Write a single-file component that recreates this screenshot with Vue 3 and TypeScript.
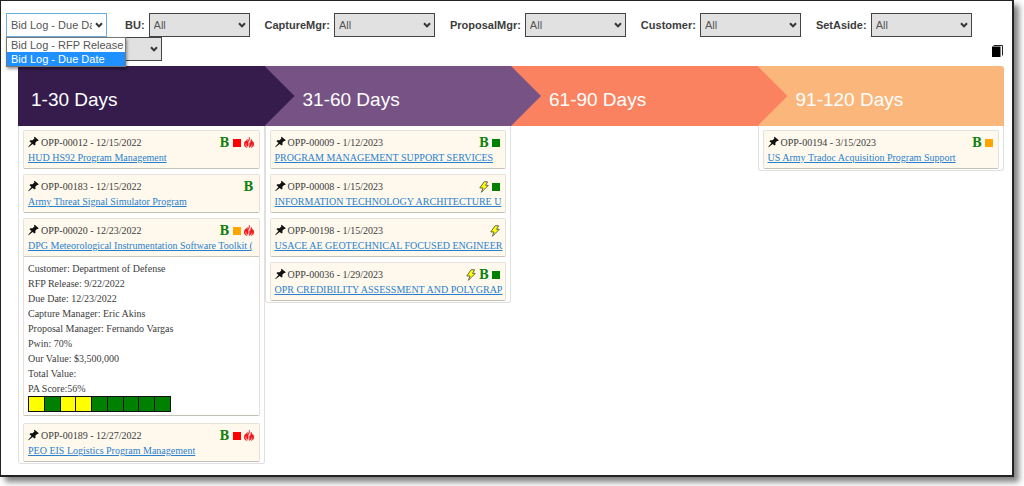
<script setup lang="ts">
import { ref } from 'vue'

type Mark = 'bolt' | 'bid' | 'red' | 'green' | 'orange' | 'fire'

interface Opportunity {
  id: string
  date: string
  title: string
  marks: Mark[]
  details?: string[]
  score?: string[]
}

interface Stage {
  label: string
  tone: string
  items: Opportunity[]
}

const views = ['Bid Log - RFP Release', 'Bid Log - Due Date']
const view = ref('Bid Log - Due Date')

const filters = [
  { id: 'bu', label: 'BU:' },
  { id: 'capture', label: 'CaptureMgr:' },
  { id: 'proposal', label: 'ProposalMgr:' },
  { id: 'customer', label: 'Customer:' },
  { id: 'setaside', label: 'SetAside:' },
]

const stages: Stage[] = [
  {
    label: '1-30 Days',
    tone: 'plum',
    items: [
      { id: 'OPP-00012', date: '12/15/2022', title: 'HUD HS92 Program Management', marks: ['bid', 'red', 'fire'] },
      { id: 'OPP-00183', date: '12/15/2022', title: 'Army Threat Signal Simulator Program', marks: ['bid'] },
      {
        id: 'OPP-00020',
        date: '12/23/2022',
        title: 'DPG Meteorological Instrumentation Software Toolkit (',
        marks: ['bid', 'orange', 'fire'],
        details: [
          'Customer: Department of Defense',
          'RFP Release: 9/22/2022',
          'Due Date: 12/23/2022',
          'Capture Manager: Eric Akins',
          'Proposal Manager: Fernando Vargas',
          'Pwin: 70%',
          'Our Value: $3,500,000',
          'Total Value:',
          'PA Score:56%',
        ],
        score: ['yellow', 'green', 'yellow', 'yellow', 'green', 'green', 'green', 'green', 'green'],
      },
      { id: 'OPP-00189', date: '12/27/2022', title: 'PEO EIS Logistics Program Management', marks: ['bid', 'red', 'fire'] },
    ],
  },
  {
    label: '31-60 Days',
    tone: 'violet',
    items: [
      { id: 'OPP-00009', date: '1/12/2023', title: 'PROGRAM MANAGEMENT SUPPORT SERVICES', marks: ['bid', 'green'] },
      { id: 'OPP-00008', date: '1/15/2023', title: 'INFORMATION TECHNOLOGY ARCHITECTURE U', marks: ['bolt', 'green'] },
      { id: 'OPP-00198', date: '1/15/2023', title: 'USACE AE GEOTECHNICAL FOCUSED ENGINEER', marks: ['bolt'] },
      { id: 'OPP-00036', date: '1/29/2023', title: 'OPR CREDIBILITY ASSESSMENT AND POLYGRAP', marks: ['bolt', 'bid', 'green'] },
    ],
  },
  { label: '61-90 Days', tone: 'coral', items: [] },
  {
    label: '91-120 Days',
    tone: 'peach',
    items: [
      { id: 'OPP-00194', date: '3/15/2023', title: 'US Army Tradoc Acquisition Program Support', marks: ['bid', 'orange'] },
    ],
  },
]
</script>

<template>
  <main class="frame">
    <form class="filters" @submit.prevent>
      <div class="picker view">
        <select v-model="view" aria-label="View">
          <option v-for="v in views" :key="v">{{ v }}</option>
        </select>
        <svg class="chevron" viewBox="0 0 8 6"><path d="M1 1.2 4 4.4 7 1.2" /></svg>
        <ul class="menu" role="listbox" aria-label="View options">
          <li v-for="v in views" :key="v" role="option" :aria-selected="v === view" :class="{ active: v === view }" @click="view = v">{{ v }}</li>
        </ul>
      </div>
      <div v-for="f in filters" :key="f.id" class="field">
        <label :for="f.id">{{ f.label }}</label>
        <div class="picker">
          <select :id="f.id"><option>All</option></select>
          <svg class="chevron" viewBox="0 0 8 6"><path d="M1 1.2 4 4.4 7 1.2" /></svg>
        </div>
      </div>
    </form>
    <div class="second">
      <div class="picker">
        <select aria-label="Status"><option></option></select>
        <svg class="chevron" viewBox="0 0 8 6"><path d="M1 1.2 4 4.4 7 1.2" /></svg>
      </div>
      <button class="copy" type="button" aria-label="Copy">
        <svg viewBox="0 0 12 12"><path d="M2.5.5h9v10" fill="none" stroke="#222" /><path d="M1 1.5h8.5V12H1z" /></svg>
      </button>
    </div>

    <section class="board">
      <div v-for="s in stages" :key="s.label" class="stage">
        <h2 :class="s.tone">{{ s.label }}</h2>
        <div v-if="s.items.length" class="cards">
          <article v-for="o in s.items" :key="o.id" :class="{ open: o.details }">
            <div class="head">
              <div class="line">
                <svg class="pin" viewBox="0 0 12 12"><path d="M7.2.2 11.8 4.2 10.8 5 9.9 4.8 8 6.9 8.2 9 7.2 9.9 5.1 8.2.6 11.6.3 11.2 3.8 7 1.6 5.1 2.5 4.1 4.9 4.2 7 2.2 6.5 1.2z" /></svg>
                <span>{{ o.id }} - {{ o.date }}</span>
                <span class="marks">
                  <template v-for="m in o.marks" :key="m">
                    <b v-if="m === 'bid'" class="bid">B</b>
                    <svg v-else-if="m === 'bolt'" class="bolt" viewBox="0 0 10 12"><path d="M5.2.7 8.6.8 6.6 4.3 9.3 4.4 2.4 11.3 4 7 .8 6.9z" /></svg>
                    <svg v-else-if="m === 'fire'" class="fire" viewBox="0 0 10 11"><path d="M5.2 0C6.3 2 5.3 3.2 4.4 4.8 3.8 6.1 4.6 7 4.3 8.3L3.5 9.5C2.3 8.6 2 7.2 2.6 5.8L1.4 7C1.2 8.5 1.9 9.6 3.3 10.6 1.1 10.2-.2 8.6.1 6.6.4 4.3 2.7 3.7 3.5 2.3L3.1 4.5C4.7 3.2 5.5 1.8 5.2 0zM7.4 2.1C7.2 3.4 8.2 4 9.2 5.1 10.8 7.4 9.7 10.1 7 10.6 8.5 9.5 8.8 8.2 7.8 7.1 7.9 8.8 6.8 9.6 5.6 10.5L4.9 10.1C6.2 8.8 5.1 7.3 5.6 5.9L6.4 4.8 6.6 6.5C7.2 5.6 6.2 3.6 7.4 2.1z" /></svg>
                    <i v-else :class="['square', m]"></i>
                  </template>
                </span>
              </div>
              <a href="#">{{ o.title }}</a>
            </div>
            <div v-if="o.details" class="details">
              <p v-for="d in o.details" :key="d">{{ d }}</p>
              <div class="score"><i v-for="(c, i) in o.score" :key="i" :class="c"></i></div>
            </div>
          </article>
        </div>
      </div>
    </section>
  </main>
</template>

<style>
body {
  background: #fff;
}
</style>

<style scoped>
* {
  box-sizing: border-box;
}
.frame {
  margin: 0 10px 10px 0;
  padding: 12px 8px 11px 5px;
  border: 2px solid #222;
  border-width: 1px 2px 2px 1px;
  box-shadow: 5px 5px 6px rgba(0, 0, 0, 0.5);
  background: #fff;
  color: #3c3c3c;
  font: 11px "Liberation Sans", Arial, sans-serif;
}
.filters {
  display: flex;
  gap: 15px;
}
.field {
  display: flex;
  align-items: center;
  gap: 4px;
}
.view {
  margin-right: 3px;
}
label {
  font-size: 11px;
  font-weight: bold;
}
.picker {
  position: relative;
  width: 101px;
}
select {
  display: block;
  width: 100%;
  height: 24px;
  padding: 0 14px 0 4px;
  appearance: none;
  border: 1px solid #444;
  border-radius: 0;
  background: #e1e1e1;
  color: #555;
  font: 11px "Liberation Sans", Arial, sans-serif;
}
.view select {
  border-color: #6aaee0;
  background: #fff;
}
.chevron {
  position: absolute;
  right: 4px;
  top: 9px;
  width: 8px;
  height: 6px;
  fill: none;
  stroke: #333;
  stroke-width: 2;
  pointer-events: none;
}
.menu {
  position: absolute;
  z-index: 5;
  top: 24px;
  left: 0;
  width: 120px;
  margin: 0;
  padding: 0;
  border: 1px solid #777;
  background: #fff;
  box-shadow: 1px 2px 3px rgba(0, 0, 0, 0.4);
  color: #555;
  line-height: 14px;
  list-style: none;
  white-space: nowrap;
}
.menu li {
  padding-left: 4px;
}
.menu .active {
  background: #1e90ff;
  color: #fff;
}
.second {
  display: flex;
  align-items: center;
  justify-content: space-between;
  padding: 0 1px 0 55px;
}
.copy {
  width: 12px;
  height: 12px;
  margin-top: 4px;
  padding: 0;
  border: 0;
  background: none;
}
.copy svg {
  display: block;
}
.board {
  display: grid;
  grid-template-columns: repeat(4, minmax(0, 1fr));
  align-items: start;
  margin: 5px 0 0 12px;
}
h2 {
  position: relative;
  height: 60px;
  margin: 0;
  padding-left: 38px;
  color: #fff;
  font-size: 19px;
  font-weight: normal;
  line-height: 68px;
}
h2::after {
  content: "";
  position: absolute;
  z-index: 1;
  top: 0;
  left: 100%;
  width: 30px;
  height: 100%;
  background: inherit;
  clip-path: polygon(0 0, 100% 50%, 0 100%);
}
.plum {
  padding-left: 13px;
  background: #351c4d;
}
.violet {
  background: #765285;
}
.coral {
  background: #fb8260;
}
.peach {
  border-radius: 0 3px 0 0;
  background: #fbb67c;
}
.peach::after {
  display: none;
}
.cards {
  display: grid;
  grid-template-columns: minmax(0, 1fr);
  gap: 5px;
  padding: 4px 4px 1px;
  border: 1px solid #e0e0e0;
  border-top: 0;
  border-radius: 0 0 3px 3px;
  font-family: "Liberation Serif", "Times New Roman", serif;
  font-size: 10px;
}
article {
  border: 1px solid #e6e2da;
  border-bottom-color: #c4c1ba;
  border-radius: 2px;
}
.open {
  margin-bottom: 2px;
}
.head {
  height: 37px;
  padding: 4px 0 0 4px;
  overflow: hidden;
  background: #fef9ec;
  line-height: 15px;
  white-space: nowrap;
}
.line {
  display: flex;
  align-items: center;
  height: 15px;
  padding-right: 5px;
}
.pin {
  width: 11px;
  height: 12px;
  margin: 0 2px 2px 0;
  fill: #111;
}
.marks {
  display: flex;
  align-items: center;
  gap: 3px;
  margin-left: auto;
}
.bid {
  color: #108010;
  font: bold 13px/14px "DejaVu Serif Condensed", "DejaVu Serif", serif;
}
.bolt {
  width: 10px;
  height: 12px;
  fill: #ff0;
  stroke: #444;
  stroke-width: 0.8;
}
.fire {
  width: 10px;
  height: 11px;
  fill: #f3141c;
  stroke: #f3141c;
  stroke-width: 0.4;
}
.square {
  width: 8px;
  height: 8px;
}
.red {
  background: #f00;
}
.green {
  background: #008000;
}
.orange {
  background: #ffa500;
}
.yellow {
  background: #ff0;
}
a {
  color: #2a80cf;
}
.details {
  padding: 4px 4px 3px;
  border-top: 1px solid #ccc8c0;
}
.details p {
  margin: 0;
  line-height: 15px;
}
.score {
  display: flex;
  width: 143px;
  border: 1px solid #111;
}
.score i {
  flex: 1;
  height: 14px;
}
.score i + i {
  border-left: 1px solid #111;
}
</style>
